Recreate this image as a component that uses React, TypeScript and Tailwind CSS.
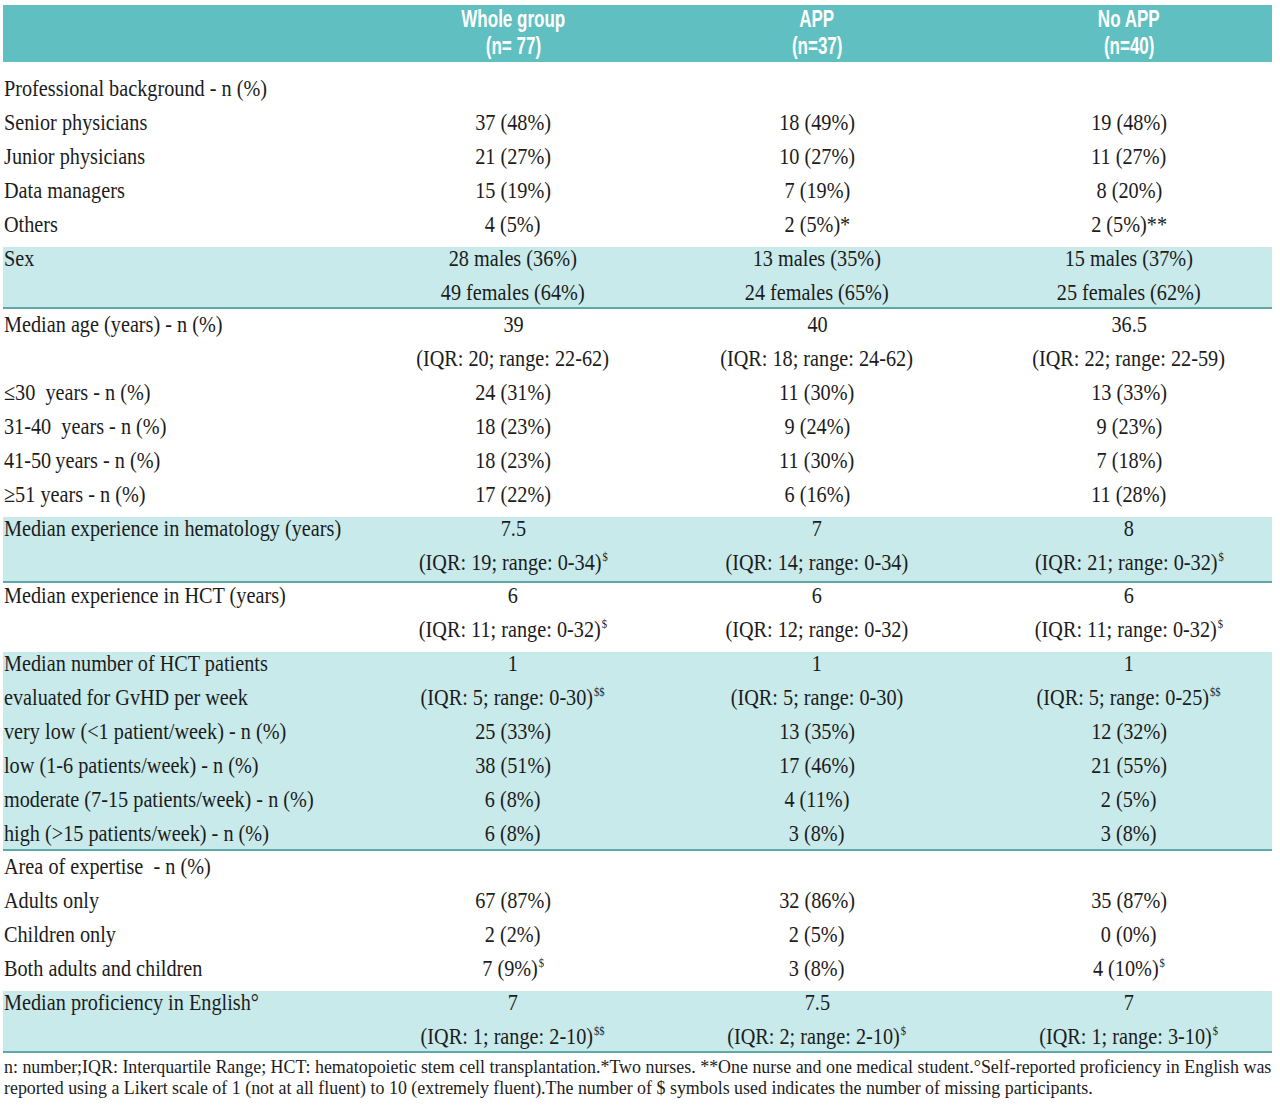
import React from "react";

type Cell = React.ReactNode;
type RowDef = { label?: Cell; cells?: Cell[]; h: string };

const S = ({ n }: { n: string }) => (
  <sup className="text-[12px] leading-none relative top-[-9px] ml-[1px]">{n}</sup>
);

function Row({ label, cells = [], h }: RowDef) {
  return (
    <div className={`grid grid-cols-[358px_304px_304px_303px] items-start ${h}`}>
      <div className="pt-[1px] pl-[1px] leading-[22px] whitespace-nowrap">
        <span className="inline-block origin-left scale-x-[0.88]">{label}</span>
      </div>
      {[0, 1, 2].map((i) => (
        <div
          key={i}
          className={`pt-[1px] leading-[22px] text-center whitespace-nowrap ${i === 2 ? "pl-[17px]" : ""}`}
        >
          <span className="inline-block scale-x-[0.88]">{cells[i]}</span>
        </div>
      ))}
    </div>
  );
}

const H34 = "h-[34px]";

const groupA: RowDef[] = [
  { label: "Professional background - n (%)", h: H34 },
  { label: "Senior physicians", cells: ["37 (48%)", "18 (49%)", "19 (48%)"], h: H34 },
  { label: "Junior physicians", cells: ["21 (27%)", "10 (27%)", "11 (27%)"], h: H34 },
  { label: "Data managers", cells: ["15 (19%)", "7 (19%)", "8 (20%)"], h: H34 },
  { label: "Others", cells: ["4 (5%)", "2 (5%)*", "2 (5%)**"], h: H34 },
];

const groupB: RowDef[] = [
  { label: "Sex", cells: ["28 males (36%)", "13 males (35%)", "15 males (37%)"], h: H34 },
  { cells: ["49 females (64%)", "24 females (65%)", "25 females (62%)"], h: "h-[26px]" },
];

const groupC: RowDef[] = [
  { label: "Median age (years) - n (%)", cells: ["39", "40", "36.5"], h: H34 },
  {
    cells: ["(IQR: 20; range: 22-62)", "(IQR: 18; range: 24-62)", "(IQR: 22; range: 22-59)"],
    h: H34,
  },
  { label: "\u226430\u00a0 years - n (%)", cells: ["24 (31%)", "11 (30%)", "13 (33%)"], h: H34 },
  { label: "31-40\u00a0 years - n (%)", cells: ["18 (23%)", "9 (24%)", "9 (23%)"], h: H34 },
  { label: "41-50\u2009years - n (%)", cells: ["18 (23%)", "11 (30%)", "7 (18%)"], h: H34 },
  { label: "\u226551 years - n (%)", cells: ["17 (22%)", "6 (16%)", "11 (28%)"], h: H34 },
];

const groupD: RowDef[] = [
  { label: "Median experience in hematology (years)", cells: ["7.5", "7", "8"], h: H34 },
  {
    cells: [
      <>(IQR: 19; range: 0-34)<S n="$" /></>,
      "(IQR: 14; range: 0-34)",
      <>(IQR: 21; range: 0-32)<S n="$" /></>,
    ],
    h: "h-[30px]",
  },
];

const groupE: RowDef[] = [
  { label: "Median experience in HCT (years)", cells: ["6", "6", "6"], h: H34 },
  {
    cells: [
      <>(IQR: 11; range: 0-32)<S n="$" /></>,
      "(IQR: 12; range: 0-32)",
      <>(IQR: 11; range: 0-32)<S n="$" /></>,
    ],
    h: H34,
  },
];

const groupF: RowDef[] = [
  { label: "Median number of HCT patients", cells: ["1", "1", "1"], h: H34 },
  {
    label: "evaluated for GvHD per week",
    cells: [
      <>(IQR: 5; range: 0-30)<S n="$$" /></>,
      "(IQR: 5; range: 0-30)",
      <>(IQR: 5; range: 0-25)<S n="$$" /></>,
    ],
    h: H34,
  },
  { label: "very low (<1 patient/week) - n (%)", cells: ["25 (33%)", "13 (35%)", "12 (32%)"], h: H34 },
  { label: "low (1-6 patients/week) - n (%)", cells: ["38 (51%)", "17 (46%)", "21 (55%)"], h: H34 },
  { label: "moderate (7-15 patients/week) - n (%)", cells: ["6 (8%)", "4 (11%)", "2 (5%)"], h: H34 },
  { label: "high (>15 patients/week) - n (%)", cells: ["6 (8%)", "3 (8%)", "3 (8%)"], h: "h-[27px]" },
];

const groupG: RowDef[] = [
  { label: "Area of expertise\u00a0 - n (%)", h: H34 },
  { label: "Adults only", cells: ["67 (87%)", "32 (86%)", "35 (87%)"], h: H34 },
  { label: "Children only", cells: ["2 (2%)", "2 (5%)", "0 (0%)"], h: H34 },
  {
    label: "Both adults and children",
    cells: [<>7 (9%)<S n="$" /></>, "3 (8%)", <>4 (10%)<S n="$" /></>],
    h: H34,
  },
];

const groupH: RowDef[] = [
  { label: "Median proficiency in English\u00b0", cells: ["7", "7.5", "7"], h: H34 },
  {
    cells: [
      <>(IQR: 1; range: 2-10)<S n="$$" /></>,
      <>(IQR: 2; range: 2-10)<S n="$" /></>,
      <>(IQR: 1; range: 3-10)<S n="$" /></>,
    ],
    h: "h-[26px]",
  },
];

function Group({ rows, shaded, pt }: { rows: RowDef[]; shaded?: boolean; pt?: string }) {
  return (
    <div
      className={`${shaded ? "bg-[#c8eaeb] border-b-2 border-[#5fa8a9]" : ""} ${pt ?? ""}`}
    >
      {rows.map((r, i) => (
        <Row key={i} {...r} />
      ))}
    </div>
  );
}

function HeadCell({ a, b, extra }: { a: string; b: string; extra?: string }) {
  return (
    <div className={`flex flex-col items-center pt-[1px] ${extra ?? ""}`}>
      <span className="inline-block scale-x-[0.74] leading-[27px] text-[23px] font-bold whitespace-nowrap">
        {a}
      </span>
      <span className="inline-block scale-x-[0.74] leading-[27px] text-[23px] font-bold whitespace-nowrap">
        {b}
      </span>
    </div>
  );
}

export default function App() {
  return (
    <div
      className="w-[1280px] h-[1108px] bg-white text-[#1c1c1c] pt-[5px] pl-[3px] overflow-hidden"
      style={{ fontFamily: '"Liberation Serif", "Times New Roman", serif' }}
    >
      <div className="w-[1269px] text-[23px]">
        <div
          className="grid grid-cols-[358px_304px_304px_303px] h-[57px] bg-[#60bfc0] text-white"
          style={{ fontFamily: '"Liberation Sans", Arial, sans-serif' }}
        >
          <div />
          <HeadCell a="Whole group" b="(n= 77)" />
          <HeadCell a="APP" b="(n=37)" />
          <HeadCell a="No APP" b="(n=40)" extra="pl-[17px]" />
        </div>
        <Group rows={groupA} pt="pt-[15px]" />
        <Group rows={groupB} shaded />
        <Group rows={groupC} pt="pt-[4px]" />
        <Group rows={groupD} shaded />
        <Group rows={groupE} pt="pt-[1px]" />
        <Group rows={groupF} shaded />
        <Group rows={groupG} pt="pt-[4px]" />
        <Group rows={groupH} shaded />
        <div className="pt-[4px] pl-[1px] text-[18px] leading-[21px] whitespace-nowrap">
          <div className="inline-block origin-left scale-x-[0.995]">
            n: number;IQR: Interquartile Range; HCT: hematopoietic stem cell transplantation.*Two
            nurses. **One nurse and one medical student.°Self-reported proficiency in English was
          </div>
          <br />
          <div className="inline-block origin-left scale-x-[0.995]">
            reported using a Likert scale of 1 (not at all fluent) to 10 (extremely fluent).The
            number of $ symbols used indicates the number of missing participants.
          </div>
        </div>
      </div>
    </div>
  );
}
